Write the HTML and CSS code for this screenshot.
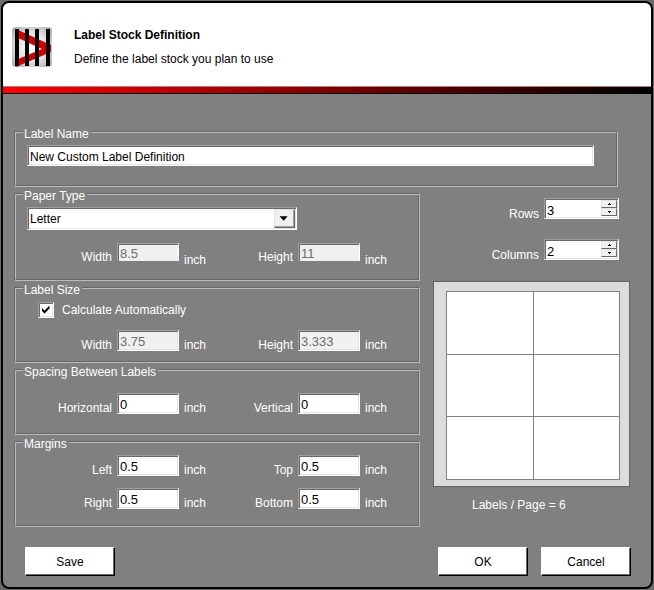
FILE: index.html
```html
<!DOCTYPE html>
<html lang="en">
<head>
    <meta charset="utf-8">
    <title>Label Stock Definition</title>
    <link rel="stylesheet" href="styles.css">
</head>
<body>
<form class="window">
    <header>
        <svg class="logo" width="40" height="40" viewBox="0 0 40 40">
            <defs>
                <radialGradient id="shade" cx="0.5" cy="0.5" r="0.7">
                    <stop offset="0" stop-color="#ffffff"/>
                    <stop offset="0.5" stop-color="#e4e4e4"/>
                    <stop offset="1" stop-color="#a8a8a8"/>
                </radialGradient>
            </defs>
            <rect width="40" height="40" rx="4" fill="url(#shade)"/>
            <path d="M4 2 L39 18 V25 L4 40 V33 L30 22 L4 10 Z" fill="#d00000"/>
            <path d="M3 2h4v37h-4z M13 2h4v37h-4z M23 2h4v37h-4z M34 2h4v37h-4z" fill="#000"/>
        </svg>
        <div>
            <h1>Label Stock Definition</h1>
            <p>Define the label stock you plan to use</p>
        </div>
    </header>
    <div class="stripe"></div>

    <main>
        <fieldset class="name">
            <legend>Label Name</legend>
            <input type="text" class="box" aria-label="Label Name" value="New Custom Label Definition">
        </fieldset>

        <div class="settings">
            <fieldset class="paper">
                <legend>Paper Type</legend>
                <div class="combo">
                    <select aria-label="Paper Type">
                        <option>Letter</option>
                        <option>Legal</option>
                        <option>A4</option>
                    </select>
                    <svg class="arrow" width="21" height="19" viewBox="0 0 21 19"><path d="M5 7h9l-4.5 5z"/></svg>
                </div>
                <div class="fields">
                    <label for="paper-width">Width</label>
                    <input type="text" class="box num" id="paper-width" value="8.5" disabled>
                    <span>inch</span>
                    <label for="paper-height">Height</label>
                    <input type="text" class="box num" id="paper-height" value="11" disabled>
                    <span>inch</span>
                </div>
            </fieldset>

            <fieldset class="size">
                <legend>Label Size</legend>
                <div class="check">
                    <input type="checkbox" id="auto" checked>
                    <label for="auto">Calculate Automatically</label>
                </div>
                <div class="fields">
                    <label for="label-width">Width</label>
                    <input type="text" class="box num" id="label-width" value="3.75" disabled>
                    <span>inch</span>
                    <label for="label-height">Height</label>
                    <input type="text" class="box num" id="label-height" value="3.333" disabled>
                    <span>inch</span>
                </div>
            </fieldset>

            <fieldset class="spacing">
                <legend>Spacing Between Labels</legend>
                <div class="fields">
                    <label for="horizontal">Horizontal</label>
                    <input type="text" class="box num" id="horizontal" value="0">
                    <span>inch</span>
                    <label for="vertical">Vertical</label>
                    <input type="text" class="box num" id="vertical" value="0">
                    <span>inch</span>
                </div>
            </fieldset>

            <fieldset class="margins">
                <legend>Margins</legend>
                <div class="fields">
                    <label for="left">Left</label>
                    <input type="text" class="box num" id="left" value="0.5">
                    <span>inch</span>
                    <label for="top">Top</label>
                    <input type="text" class="box num" id="top" value="0.5">
                    <span>inch</span>
                    <label for="right">Right</label>
                    <input type="text" class="box num" id="right" value="0.5">
                    <span>inch</span>
                    <label for="bottom">Bottom</label>
                    <input type="text" class="box num" id="bottom" value="0.5">
                    <span>inch</span>
                </div>
            </fieldset>
        </div>

        <div class="layout">
            <div class="counts">
                <label for="rows">Rows</label>
                <div class="box spinner">
                    <input type="number" id="rows" value="3" min="1">
                    <div class="steps">
                        <button type="button" aria-label="More rows"><svg width="3" height="2" viewBox="0 0 3 2"><path d="M1 0h1v1h1v1h-3v-1h1z"/></svg></button>
                        <button type="button" aria-label="Fewer rows"><svg width="3" height="2" viewBox="0 0 3 2"><path d="M0 0h3v1h-1v1h-1v-1h-1z"/></svg></button>
                    </div>
                </div>
                <label for="columns">Columns</label>
                <div class="box spinner">
                    <input type="number" id="columns" value="2" min="1">
                    <div class="steps">
                        <button type="button" aria-label="More columns"><svg width="3" height="2" viewBox="0 0 3 2"><path d="M1 0h1v1h1v1h-3v-1h1z"/></svg></button>
                        <button type="button" aria-label="Fewer columns"><svg width="3" height="2" viewBox="0 0 3 2"><path d="M0 0h3v1h-1v1h-1v-1h-1z"/></svg></button>
                    </div>
                </div>
            </div>
            <div class="preview">
                <div class="sheet">
                    <div></div><div></div>
                    <div></div><div></div>
                    <div></div><div></div>
                </div>
            </div>
            <p class="total">Labels / Page = 6</p>
        </div>
    </main>

    <footer>
        <button type="button" class="btn save">Save</button>
        <button type="submit" class="btn">OK</button>
        <button type="button" class="btn">Cancel</button>
    </footer>
</form>
</body>
</html>
```

FILE: styles.css
```css
* {
    box-sizing: border-box;
}
body, h1, p, fieldset {
    margin: 0;
    padding: 0;
}
body {
    background: #6a6a6a;
    padding: 1px;
}
body, input, select, button {
    font-family: "Liberation Sans", Arial, sans-serif;
    font-size: 12px;
    line-height: 14px;
}
.window {
    min-height: calc(100vh - 2px);
    border: 2px solid #000;
    border-radius: 8px;
    background: #808080;
    color: #fff;
    overflow: hidden;
}

/* header */
header {
    display: flex;
    align-items: center;
    gap: 22px;
    height: 83px;
    padding: 5px 9px 0;
    background: #fff;
    color: #000;
}
header h1 {
    font-size: 12px;
    margin-bottom: 10px;
}
.stripe {
    height: 8px;
    border-top: 1px solid #b08080;
    border-bottom: 1px solid #000;
    background: linear-gradient(to right, #f00, #000);
}

/* body */
main {
    display: grid;
    grid-template-columns: 1fr 197px;
    column-gap: 13px;
    padding: 31px 21px 0 11px;
}
fieldset {
    min-width: 0;
    margin-top: -2px;
    border: 2px groove #bbb;
}
legend {
    margin-left: -4px;
    padding: 4px 2px 0 1px;
}
.name {
    grid-column: 1 / 3;
    margin-right: 12px;
    padding: 4px 22px 19px 11px;
}
.name .box {
    width: 100%;
}
.paper {
    padding: 4px 11px 18px;
}
.size {
    padding: 5px 11px 10px;
}
.spacing {
    padding: 14px 11px 19px;
}
.margins {
    padding: 4px 11px 16px;
}

/* sunken boxes */
.box, .combo {
    display: block;
    height: 21px;
    border: 1px solid;
    border-color: #a0a0a0 #fff #fff #a0a0a0;
    border-radius: 0;
    background: #fff;
    box-shadow: inset 1px 1px #696969, inset -1px -1px #e3e3e3;
    color: #000;
    outline: none;
}
.box {
    padding: 2px 2px 0;
}
.num {
    width: 62px;
    font-size: 13px;
    padding: 3px 2px 1px;
}
.num:disabled {
    background: #f0f0f0;
    color: #6d6d6d;
}
.fields {
    display: grid;
    grid-template-columns: 85px 62px 24px 80px 62px 24px;
    gap: 12px 5px;
    align-items: end;
}
.fields label {
    text-align: right;
}
.fields label, .fields span {
    margin-bottom: -1px;
}
.paper .fields {
    margin-top: 13px;
}
.paper .num {
    height: 18px;
    border-bottom: 0;
    box-shadow: inset 1px 1px #696969;
}
.paper .fields label {
    margin-bottom: -3px;
}
.paper .fields span {
    margin-bottom: -6px;
}

/* drop-down */
.combo {
    display: flex;
    position: relative;
    width: 270px;
    height: 23px;
    padding: 1px;
}
.combo select {
    flex: 1;
    appearance: none;
    border: 0;
    padding: 0 1px;
    background: none;
    color: #000;
    outline: none;
}
.arrow {
    position: absolute;
    top: 1px;
    right: 1px;
    border: 1px solid;
    border-color: #e3e3e3 #696969 #696969 #e3e3e3;
    background: #f0f0f0;
    box-shadow: inset -1px -1px #a0a0a0;
    pointer-events: none;
}

/* tick box */
.check {
    display: flex;
    align-items: center;
    gap: 8px;
    margin-bottom: 12px;
    padding-left: 11px;
}
.check input {
    appearance: none;
    width: 16px;
    height: 16px;
    margin: 0;
    border: 1px solid;
    border-color: #a0a0a0 #fff #fff #a0a0a0;
    background: #fff;
    box-shadow: inset 1px 1px #696969, inset -1px -1px #e3e3e3;
}
.check input:checked {
    background: #fff url("data:image/svg+xml,%3Csvg xmlns='http://www.w3.org/2000/svg' width='14' height='14'%3E%3Cpath d='M3 5l2.500 2.500 5-5v3l-5 5-2.500-2.500z'/%3E%3C/svg%3E") no-repeat;
}

/* right side */
.layout {
    padding-top: 11px;
}
.counts {
    display: grid;
    grid-template-columns: 1fr 75px;
    gap: 20px 5px;
    align-items: end;
    margin: 0 11px 21px 0;
    text-align: right;
}
.counts label {
    margin-bottom: -2px;
}
.spinner {
    display: flex;
    padding: 1px;
}
.spinner input {
    flex: 1;
    min-width: 0;
    appearance: textfield;
    border: 0;
    padding: 4px 1px 0;
    background: none;
    color: #000;
    font-size: 13px;
    outline: none;
}
.spinner input::-webkit-inner-spin-button {
    display: none;
}
.steps {
    display: grid;
    grid-template-rows: 8px 8px;
    width: 16px;
}
.steps button {
    display: flex;
    align-items: center;
    justify-content: center;
    padding: 0;
    border: 1px solid;
    border-color: #e3e3e3 #696969 #696969 #e3e3e3;
    background: #f0f0f0;
}
.preview {
    height: 206px;
    padding: 9px 9px 6px 12px;
    border: 1px solid #646464;
    background: #dcdcdc;
}
.sheet {
    display: grid;
    grid-template-columns: 1fr 1fr;
    grid-auto-rows: 1fr;
    gap: 1px;
    height: 100%;
    border: 1px solid #808080;
    background: #808080;
}
.sheet div {
    background: #fff;
}
.total {
    margin-top: 11px;
    padding-left: 39px;
}

/* buttons */
footer {
    display: flex;
    gap: 13px;
    padding: 20px 20px 11px 22px;
}
.btn {
    width: 90px;
    height: 29px;
    border: 1px solid;
    border-color: #fff #000 #000 #fff;
    background: #fff;
    box-shadow: inset -1px -1px #696969;
    color: #000;
}
.save {
    margin-right: auto;
}
```
